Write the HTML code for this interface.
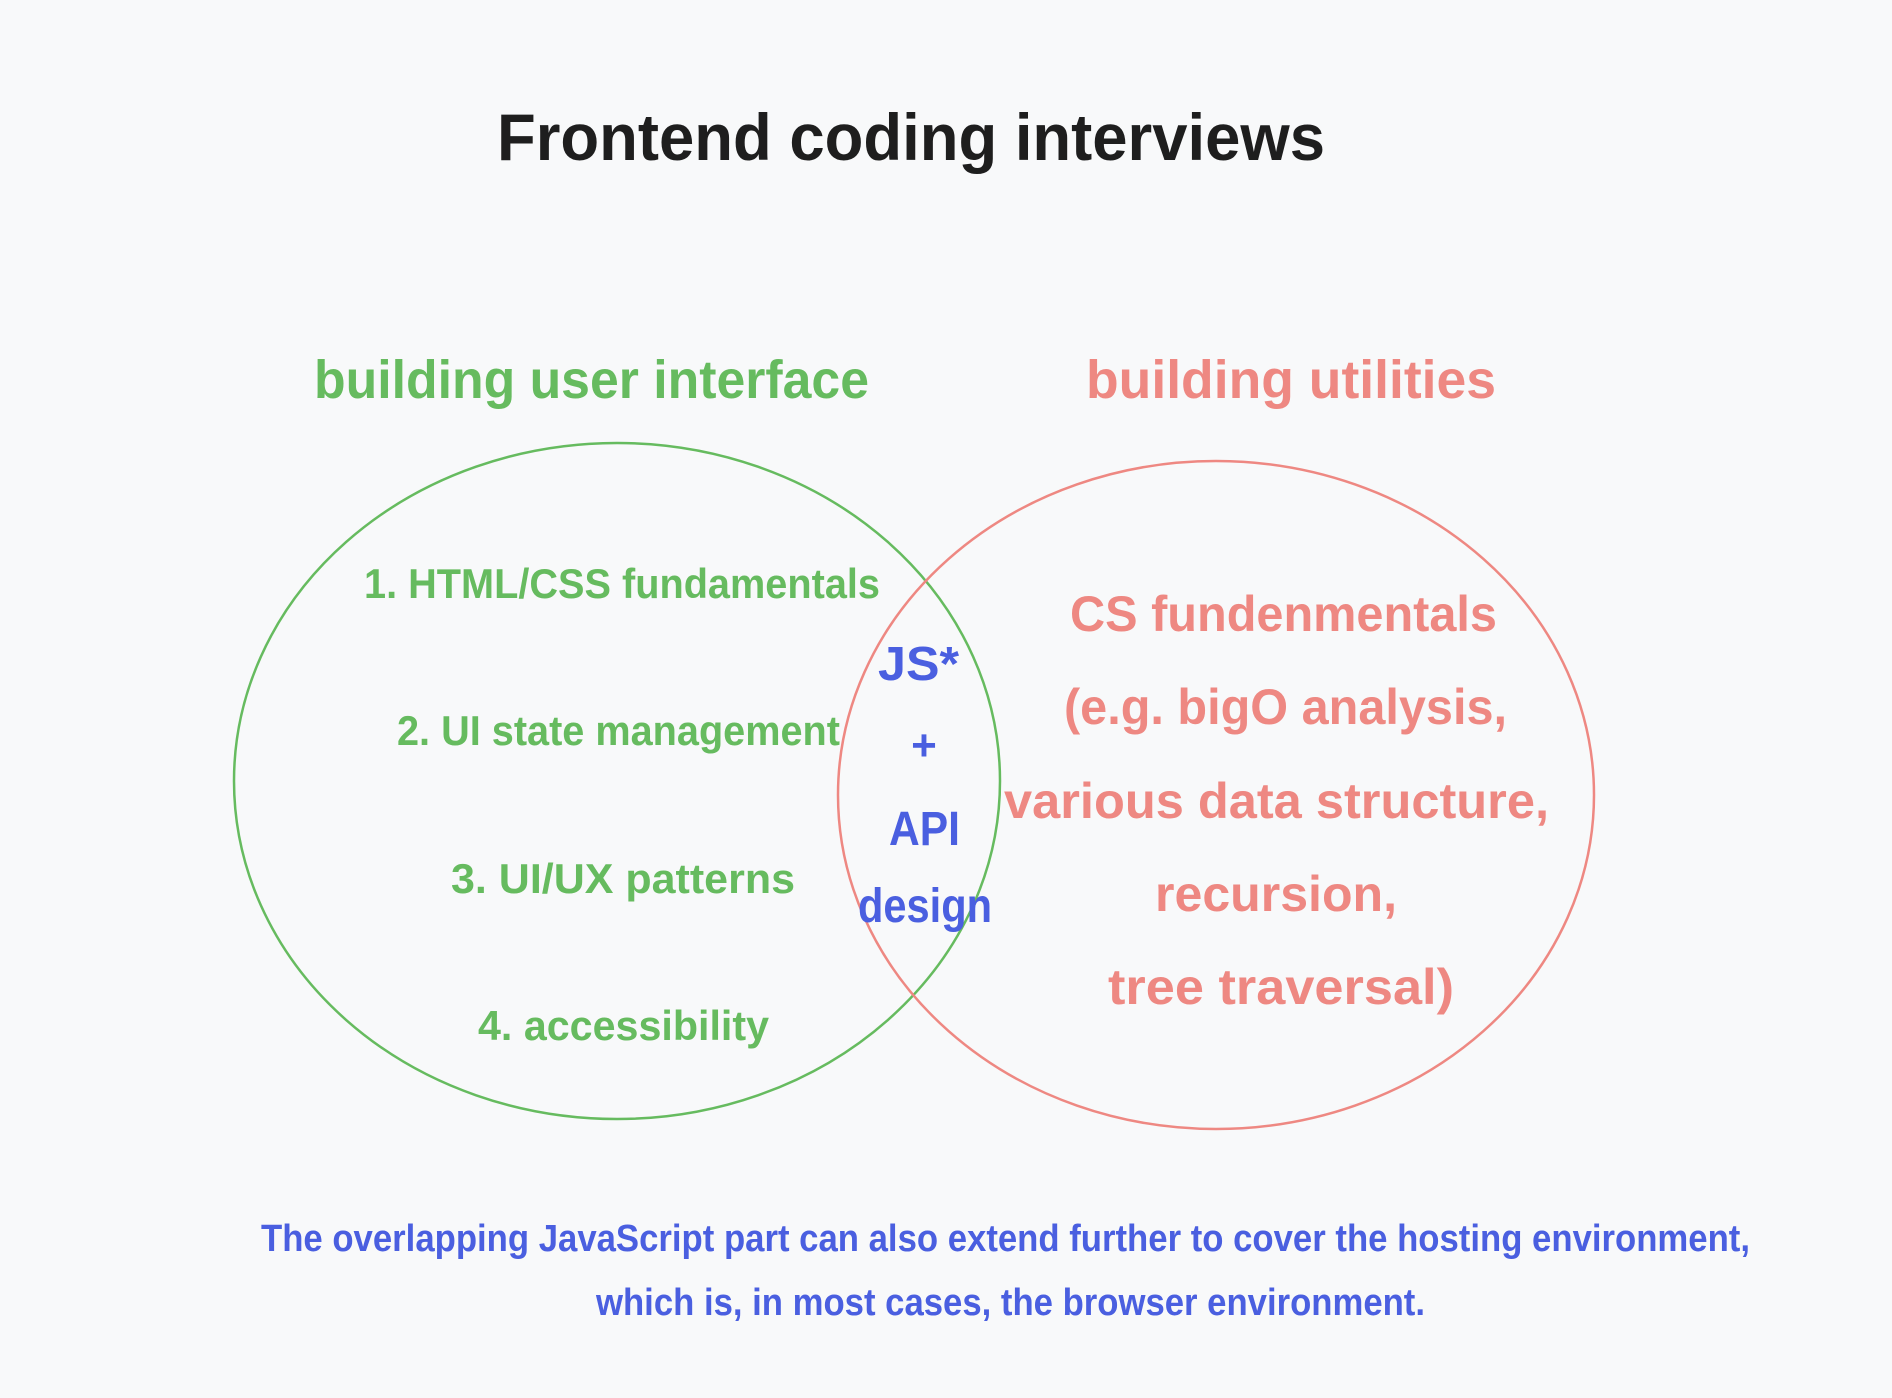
<!DOCTYPE html>
<html><head><meta charset="utf-8"><style>
html,body{margin:0;padding:0;background:#f8f9fa;}
svg{display:block}
text{font-family:"Liberation Sans",sans-serif;font-weight:bold;}
</style></head><body>
<svg width="1892" height="1398" viewBox="0 0 1892 1398" xmlns="http://www.w3.org/2000/svg">
<rect width="1892" height="1398" fill="#f8f9fa"/>
<text x="497" y="160" font-size="66" fill="#1e1e1e" textLength="828" lengthAdjust="spacingAndGlyphs">Frontend coding interviews</text>
<ellipse cx="617" cy="781" rx="383" ry="338" fill="none" stroke="#66bb5f" stroke-width="2.5"/>
<ellipse cx="1216" cy="795" rx="378" ry="334" fill="none" stroke="#ee8882" stroke-width="2.5"/>
<g fill="#66bb5f">
<text x="314" y="398" font-size="54" textLength="555" lengthAdjust="spacingAndGlyphs">building user interface</text>
<text x="364" y="598" font-size="42" textLength="516" lengthAdjust="spacingAndGlyphs">1. HTML/CSS fundamentals</text>
<text x="397" y="745" font-size="42" textLength="443" lengthAdjust="spacingAndGlyphs">2. UI state management</text>
<text x="451" y="893" font-size="42" textLength="344" lengthAdjust="spacingAndGlyphs">3. UI/UX patterns</text>
<text x="478" y="1040" font-size="42" textLength="291" lengthAdjust="spacingAndGlyphs">4.  accessibility</text>
</g>
<g fill="#ee8882">
<text x="1086" y="398" font-size="54" textLength="410" lengthAdjust="spacingAndGlyphs">building  utilities</text>
<text x="1070" y="631" font-size="50" textLength="427" lengthAdjust="spacingAndGlyphs">CS fundenmentals</text>
<text x="1064" y="724" font-size="50" textLength="443" lengthAdjust="spacingAndGlyphs">(e.g. bigO analysis,</text>
<text x="1004" y="818" font-size="50" textLength="545" lengthAdjust="spacingAndGlyphs">various data structure,</text>
<text x="1155" y="911" font-size="50" textLength="242" lengthAdjust="spacingAndGlyphs">recursion,</text>
<text x="1108" y="1004" font-size="50" textLength="346" lengthAdjust="spacingAndGlyphs">tree traversal)</text>
</g>
<g fill="#4a5fe0">
<text x="878" y="680" font-size="48" textLength="81" lengthAdjust="spacingAndGlyphs">JS*</text>
<text x="924" y="760" font-size="44" text-anchor="middle">+</text>
<text x="889" y="845" font-size="48" textLength="71" lengthAdjust="spacingAndGlyphs">API</text>
<text x="858" y="922" font-size="48" textLength="134" lengthAdjust="spacingAndGlyphs">design</text>
<text x="261" y="1251" font-size="38" textLength="1489" lengthAdjust="spacingAndGlyphs">The overlapping JavaScript part can also extend further to cover the hosting environment,</text>
<text x="596" y="1315" font-size="38" textLength="829" lengthAdjust="spacingAndGlyphs">which is, in most cases, the browser environment.</text>
</g>
</svg>
</body></html>
